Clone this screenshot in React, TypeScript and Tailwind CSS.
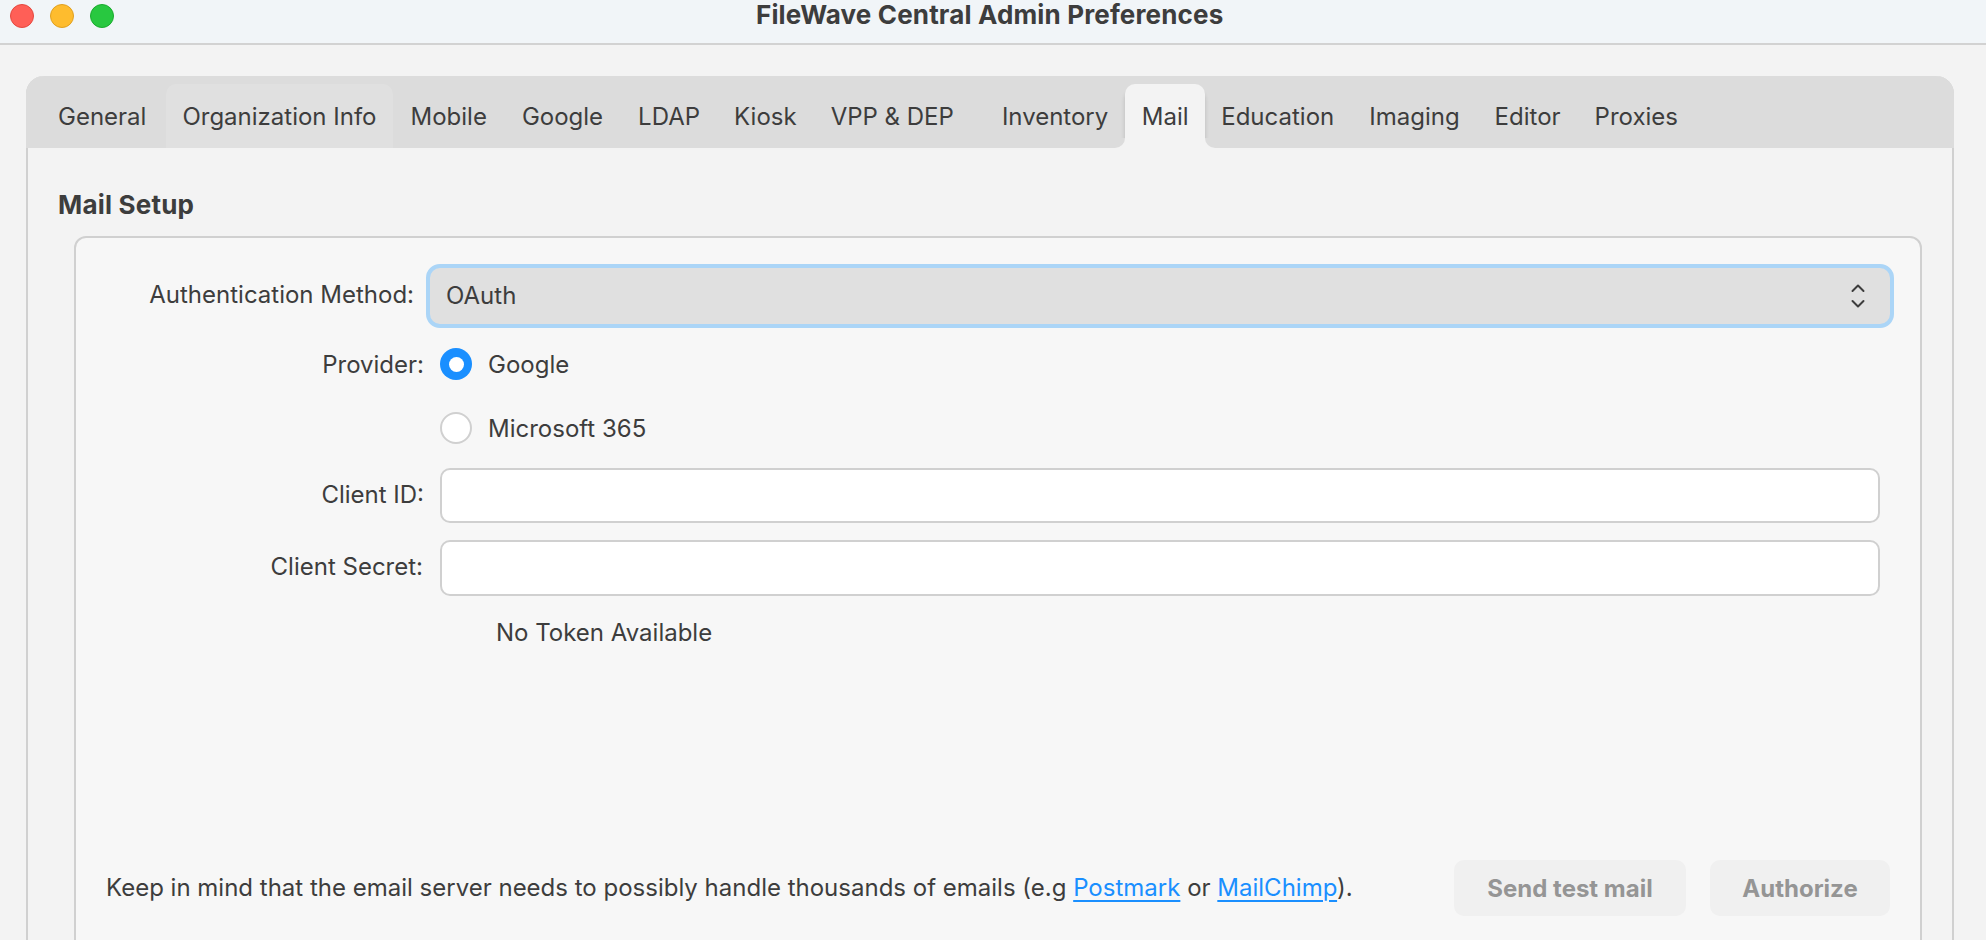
import React from 'react';

const tabs = [
  { label: 'General', className: 'ml-[32px]' },
  { label: 'Organization Info', className: 'ml-[20px] pl-[16px] pr-[16px] bg-[#e0e0e0]' },
  { label: 'Mobile', className: 'ml-[18px]' },
  { label: 'Google', className: 'ml-[35px]' },
  { label: 'LDAP', className: 'ml-[35px]' },
  { label: 'Kiosk', className: 'ml-[34px]' },
  { label: 'VPP & DEP', className: 'ml-[34px]' },
  { label: 'Inventory', className: 'ml-[48px]' },
];

const moreTabs = [
  { label: 'Education', className: 'ml-[16px]' },
  { label: 'Imaging', className: 'ml-[35px]' },
  { label: 'Editor', className: 'ml-[35px]' },
  { label: 'Proxies', className: 'ml-[34px]' },
];

const Tab: React.FC<{ label: string; className: string }> = ({ label, className }) => (
  <div className={`h-[64px] flex items-center pt-[2px] rounded-t-[10px] whitespace-nowrap ${className}`}>{label}</div>
);

export default function App() {
  return (
    <div className="w-[1986px] h-[940px] overflow-hidden flex flex-col bg-[#f3f3f3] text-[#3d3d3d] text-[24px] font-['Inter',sans-serif]">
      {/* Title bar */}
      <div className="h-[45px] shrink-0 flex items-center bg-[#f1f5f8] border-b-2 border-[#d2d2d2] pl-[10px] pb-[11px]">
        <div className="w-[24px] h-[24px] rounded-full bg-[#ff5f57] border border-[#e5483f]" />
        <div className="w-[24px] h-[24px] rounded-full bg-[#febc2e] border border-[#e0a020] ml-[16px]" />
        <div className="w-[24px] h-[24px] rounded-full bg-[#28c840] border border-[#1aab2e] ml-[16px]" />
        <div className="ml-[642px] -mt-[3px] text-[26px] font-bold tracking-[0.15px] whitespace-nowrap">FileWave Central Admin Preferences</div>
      </div>

      {/* Preferences panel */}
      <div className="mt-[31px] ml-[26px] w-[1928px] h-[900px] shrink-0 rounded-t-[18px] border-x-2 border-[#d0d0d0] bg-[#f3f3f3] flex flex-col">
        <div className="h-[72px] shrink-0 -mx-[2px] rounded-t-[18px] bg-[#dcdcdc] flex items-end overflow-hidden">
          {tabs.map((tab) => (
            <Tab key={tab.label} label={tab.label} className={tab.className} />
          ))}
          <div className="relative ml-[17px] h-[64px] w-[80px] flex items-center justify-center pt-[2px] rounded-t-[10px] bg-[#f3f3f3] shadow-[0_6px_4px_rgba(0,0,0,0.16)]">
            Mail
            <div className="absolute -left-[10px] bottom-0 w-[10px] h-[10px] bg-[#f3f3f3]">
              <div className="w-full h-full bg-[#dcdcdc] rounded-br-[10px]" />
            </div>
            <div className="absolute -right-[10px] bottom-0 w-[10px] h-[10px] bg-[#f3f3f3]">
              <div className="w-full h-full bg-[#dcdcdc] rounded-bl-[10px]" />
            </div>
          </div>
          {moreTabs.map((tab) => (
            <Tab key={tab.label} label={tab.label} className={tab.className} />
          ))}
        </div>

        <div className="pl-[30px] mt-[41px] h-[30px] flex items-center text-[26px] font-bold tracking-[0.2px]">Mail Setup</div>

        {/* Mail setup box */}
        <div className="ml-[46px] mt-[17px] w-[1848px] h-[720px] shrink-0 rounded-t-[12px] border-2 border-[#d0d0d0] bg-[#f7f7f7] flex flex-col pb-[38px]">
          <div className="mt-[26px] flex items-center h-[64px]">
            <div className="w-[338px] shrink-0 text-right whitespace-nowrap -mt-[2px]">Authentication Method:</div>
            <div className="ml-[12px] w-[1468px] h-[64px] rounded-[14px] border-4 border-[#abd5f7] bg-[#e0e0e0] flex items-center justify-between pl-[16px] pr-[25px]">
              <span>OAuth</span>
              <svg width="14" height="24" viewBox="0 0 14 24" fill="none" stroke="#3d3d3d" strokeWidth="2" strokeLinecap="round" strokeLinejoin="round">
                <path d="M1.5 7 L7 1.5 L12.5 7" />
                <path d="M1.5 17 L7 22.5 L12.5 17" />
              </svg>
            </div>
          </div>

          <div className="mt-[20px] flex items-center h-[32px]">
            <div className="w-[348px] shrink-0 text-right whitespace-nowrap mt-[2px]">Provider:</div>
            <div className="ml-[16px] w-[32px] h-[32px] rounded-full bg-[#1a8fff] flex items-center justify-center">
              <div className="w-[15px] h-[15px] rounded-full bg-white" />
            </div>
            <span className="ml-[16px] mt-[2px]">Google</span>
          </div>

          <div className="mt-[32px] flex items-center h-[32px] pl-[364px]">
            <div className="w-[32px] h-[32px] rounded-full bg-white border-2 border-[#d0d0d0]" />
            <span className="ml-[16px] mt-[2px]">Microsoft 365</span>
          </div>

          <div className="mt-[24px] flex items-center h-[55px]">
            <div className="w-[348px] shrink-0 text-right whitespace-nowrap -mt-[2px]">Client ID:</div>
            <div className="ml-[16px] w-[1440px] h-[55px] rounded-[10px] bg-white border-2 border-[#d0d0d0]" />
          </div>

          <div className="mt-[17px] flex items-center h-[56px]">
            <div className="w-[347px] shrink-0 text-right whitespace-nowrap -mt-[2px]">Client Secret:</div>
            <div className="ml-[17px] w-[1440px] h-[56px] rounded-[10px] bg-white border-2 border-[#d0d0d0]" />
          </div>

          <div className="mt-[22px] pl-[420px] h-[30px] flex items-center">No Token Available</div>

          {/* Footer row */}
          <div className="mt-auto flex items-center pl-[30px]">
            <div className="whitespace-nowrap">
              Keep in mind that the email server needs to possibly handle thousands of emails (e.g{' '}
              <a className="text-[#1a8fff] underline decoration-2 underline-offset-4">Postmark</a> or{' '}
              <a className="text-[#1a8fff] underline decoration-2 underline-offset-4">MailChimp</a>).
            </div>
            <button className="ml-auto w-[232px] h-[56px] pt-[2px] rounded-[10px] bg-[#f0f0f0] text-[#959595] font-bold">Send test mail</button>
            <button className="ml-[24px] mr-[30px] w-[180px] h-[56px] pt-[2px] rounded-[10px] bg-[#f0f0f0] text-[#959595] font-bold">Authorize</button>
          </div>
        </div>
      </div>
    </div>
  );
}
